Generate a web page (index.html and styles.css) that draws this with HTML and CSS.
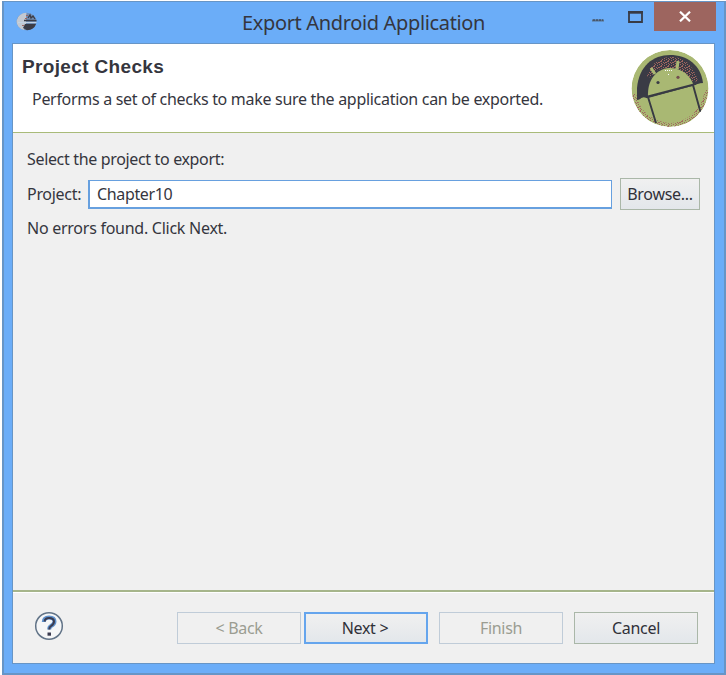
FILE: index.html
```html
<!DOCTYPE html>
<html lang="en">
<head>
<meta charset="utf-8">
<title>Export Android Application</title>
<link rel="stylesheet" href="styles.css">
</head>
<body>
<main class="window">
  <header class="titlebar">
    <svg class="app-icon" width="22" height="20" viewBox="0 0 22 20">
      <ellipse cx="10.500" cy="9.500" rx="10" ry="8.800" fill="#718eb5"/>
      <path d="M10.500.7A10 8.800 0 0 0 8 18L10 13V5Z" fill="#c3c9d2"/>
      <path d="M9 12H20Q18 18 11 18.300L7 16Z" fill="#3b3c46"/>
      <path d="M12 6l2-3 1 3 2-2 2 3" stroke="#3b3c46" stroke-width="1.300" fill="none"/>
      <path d="M8 8.500H20.500" stroke="#3b3c46" stroke-width="1.500"/>
      <path d="M2 10.500H20.500" stroke="#c3d3e3"/>
      <path d="M10 3.500h2M9 6.500h2M6 13.500h2" stroke="#a0665f"/>
    </svg>
    <h1 class="title"><span>Export Android Application</span></h1>
    <div class="controls">
      <svg class="minimize" width="12" height="4" viewBox="0 0 12 4"><path d="M0 2.500H12" stroke="#57718f" stroke-width="2"/><path d="M1 2H11" stroke="#3b3c46" stroke-dasharray="2 1"/></svg>
      <svg class="maximize" width="15" height="12" viewBox="0 0 15 12"><path d="M1 1.500H14V11H1Z" fill="none" stroke="#383b45" stroke-width="1.800"/><path d="M0 1.200H15" stroke="#383b45" stroke-width="2.400"/></svg>
      <div class="close"><svg width="12" height="11" viewBox="0 0 12 11"><path d="M1 .7L11 10.300M11 .7L1 10.300" stroke="#fff" stroke-width="2.200"/></svg></div>
    </div>
  </header>
  <section class="client">
    <div class="banner">
      <div class="banner-text">
        <h2><span>Project Checks</span></h2>
        <p><span>Performs a set of checks to make sure the application can be exported.</span></p>
      </div>
      <svg class="android" width="78" height="79" viewBox="0 0 78 79">
        <defs>
          <pattern id="dither" width="7" height="5" patternUnits="userSpaceOnUse"><path d="M0 0h1v1H0zM3 0h1v1H3zM5 1h1v1H5zM1 2h2v1H1zM4 3h1v1H4zM6 3h1v1H6zM2 4h1v1H2zM0 3h1v1H0zM5 4h1v1H5zM2 1h1v1H2z" fill="#a0665f"/></pattern>
          <clipPath id="disc"><circle cx="39" cy="39.500" r="38.500"/></clipPath>
        </defs>
        <g clip-path="url(#disc)">
          <circle cx="39" cy="39.500" r="38.500" fill="#a9b873"/>
          <path d="M6 51V39C8 17 22 6 39 6S70 16 72 34L61 37 17 49Z" fill="#3a3b45"/>
          <path d="M16 27Q21 9 40 8T67 32L60 33Q52 20 38 19T20 29Z" fill="url(#dither)"/>
          <path d="M17 48C16 30 26 20 38 19C50 18 60 27 62.500 36Z" fill="#a9b873"/>
          <path d="M24 25L20 19M46 20L47 12" stroke="#a9b873" stroke-width="3"/>
          <path d="M8 51Q12 46 17 50L25 73 19 71ZM63 37Q71 31 76 38L73 60 70 61Z" fill="#a9b873"/>
          <path d="M3 45Q8 72 39 76.500Q71 72 76 41" fill="none" stroke="url(#dither)" stroke-width="4"/>
          <path d="M17 47.500L63 35.500M17 48L25 74M62 36L69.500 63" stroke="#383a43" stroke-width="1.900" fill="none"/>
          <circle cx="27" cy="33.500" r="1.600" fill="#3b3c46"/><circle cx="47" cy="28.300" r="1.600" fill="#74504f"/>
          <path d="M34 21.500h8M37 25.500h1" stroke="#fff" stroke-dasharray="1 1"/>
        </g>
      </svg>
    </div>
    <div class="content">
      <p class="prompt"><span>Select the project to export:</span></p>
      <div class="project-row">
        <label for="project"><span>Project:</span></label>
        <input id="project" value="Chapter10">
        <button class="button browse"><span>Browse...</span></button>
      </div>
      <p class="status"><span>No errors found. Click Next.</span></p>
    </div>
    <footer class="actions">
      <svg class="help" width="30" height="30" viewBox="0 0 30 30">
        <circle cx="15" cy="15" r="13.300" fill="#f5f6f7" stroke="#617387" stroke-width="1.500"/>
        <path d="M9.800 11Q9.800 6.500 15 6.500Q20.500 6.500 20.500 10.500Q20.500 13 17 15Q15.200 16 15.200 18.500" fill="none" stroke="#6092cd" stroke-width="4"/>
        <path d="M10.500 10.500Q11 7 15 7Q20 7 20 10.500Q20 13 17 15Q15.200 16 15.200 18.500" fill="none" stroke="#3b3c50" stroke-width="2"/>
        <path d="M13.500 21.500h3.500v3.200h-3.500z" fill="#3b3c50"/>
      </svg>
      <button class="button back" disabled><span>&lt; Back</span></button>
      <button class="button next"><span>Next &gt;</span></button>
      <button class="button finish" disabled><span>Finish</span></button>
      <button class="button cancel"><span>Cancel</span></button>
    </footer>
  </section>
</main>
</body>
</html>
```
FILE: styles.css
```css
* { box-sizing: border-box; }
body {
  margin: 0;
  padding: 1px 0 0 2px;
  height: 675px;
  overflow: hidden;
  background: #fff;
  color: #35363e;
  font: 16px/22px "Noto Sans", "Open Sans", sans-serif;
}
h1, h2, p { margin: 0; font-weight: 400; }
.window {
  width: 724px;
  height: 674px;
  padding: 0 10px 10px 9px;
  background: #6badf8;
  border: 2px solid #6795c6;
  border-top-width: 1px;
}
.titlebar { display: flex; height: 41px; align-items: flex-start; }
.app-icon { margin: 10px 0 0 3px; }
.title { flex: 1; padding-left: 204px; font-size: 20px; line-height: 42px; white-space: nowrap; letter-spacing: -.35px; }
.controls { display: flex; flex: none; margin-right: -2px; }
.minimize { margin-top: 16px; margin-right: 24px; }
.maximize { margin-top: 9px; margin-right: 11px; }
.close { width: 62px; height: 29px; background: #9d655f; display: grid; place-items: center; }
.client {
  display: flex;
  flex-direction: column;
  width: 703px;
  height: 621px;
  margin-left: -1px;
  background: #f0f0f0;
  border: 1px solid #6795c6;
}
.banner { display: flex; justify-content: space-between; height: 89px; flex: none; background: #fff; border-bottom: 1px solid #a9bb79; }
.banner-text { padding: 12px 0 0 9px; white-space: nowrap; }
h2 { font: bold 19px/22px "Liberation Sans", sans-serif; letter-spacing: .35px; }
.banner-text p { margin: 10px 0 0 10px; letter-spacing: -.3px; }
.android { margin: 5px 5px 0 0; }
.content { flex: 1; padding: 15px 14px 0 14px; letter-spacing: -.3px; }
.prompt, .status { letter-spacing: -.26px; }
.prompt { letter-spacing: -.34px; }
.project-row { display: flex; align-items: center; height: 32px; margin-top: 8px; }
label { flex: none; width: 61px; }
input {
  flex: none;
  width: 524px;
  height: 29px;
  padding: 0 7px;
  border: 2px solid #67a0df;
  border-width: 1px 1px 2px 2px;
  background: #fff;
  color: inherit;
  font: inherit;
  letter-spacing: -.35px;
  outline: none;
}
.button {
  padding: 0;
  border: 1px solid #aab7a8;
  border-radius: 0;
  background: linear-gradient(#f0f0f0, #e3e7eb);
  color: #303139;
  font: inherit;
  letter-spacing: -.3px;
}
.browse { flex: none; width: 80px; height: 32px; margin-left: 8px; }
.status { margin-top: 7px; }
.actions { display: flex; align-items: flex-start; height: 73px; flex: none; border-top: 2px solid #a6b58b; padding: 20px 0 0 21px; box-shadow: inset 0 1px #fff; }
.help { margin-right: 113px; margin-top: -1px; }
.actions .button { flex: none; width: 124px; height: 32px; }
.back { margin-right: 3px; }
.button:disabled { background: #f0f0f0; border-color: #c0ccd8; color: #9b9d92; }
.actions .next { border: 2px solid #65a5ed; margin-right: 11px; }
.actions .next span { position: relative; left: -1px; }
.finish { margin-right: 11px; }
```
